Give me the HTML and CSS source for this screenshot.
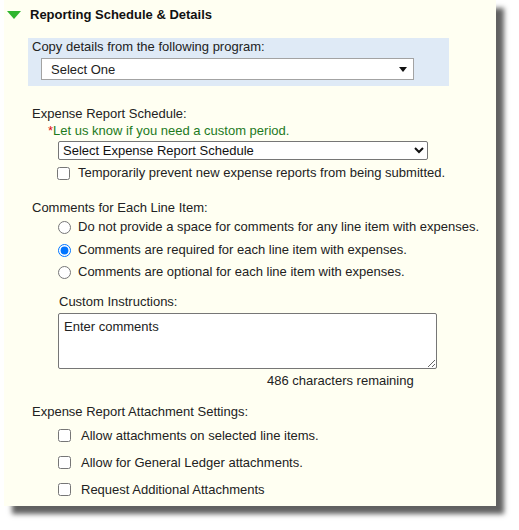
FILE: index.html
```html
<!DOCTYPE html>
<html>
<head>
<meta charset="utf-8">
<title>Reporting Schedule &amp; Details</title>
<link rel="stylesheet" href="styles.css">
</head>
<body>
<div class="panel">
  <div class="header">
    <svg class="toggle" width="14" height="8" viewBox="0 0 14 8"><polygon points="0,0 14,0 7,8" fill="#2fb52f"/></svg>
    <span class="title">Reporting Schedule &amp; Details</span>
  </div>

  <div class="copy-box">
    <div class="copy-label">Copy details from the following program:</div>
    <div class="select-wrap">
      <select class="copy-select"><option>Select One</option></select>
      <svg class="select-arrow" width="8" height="5" viewBox="0 0 8 5"><polygon points="0,0 8,0 4,5" fill="#111"/></svg>
    </div>
  </div>

  <div class="label">Expense Report Schedule:</div>
  <div class="note"><span class="req">*</span>Let us know if you need a custom period.</div>
  <select class="schedule-select"><option>Select Expense Report Schedule</option></select>
  <label class="check-row first-check">
    <input type="checkbox" class="box">
    <span>Temporarily prevent new expense reports from being submitted.</span>
  </label>

  <div class="label comments-label">Comments for Each Line Item:</div>
  <label class="radio-row r1"><input type="radio" name="c" class="radio"><span>Do not provide a space for comments for any line item with expenses.</span></label>
  <label class="radio-row r2"><input type="radio" name="c" class="radio" checked><span>Comments are required for each line item with expenses.</span></label>
  <label class="radio-row r3"><input type="radio" name="c" class="radio"><span>Comments are optional for each line item with expenses.</span></label>

  <div class="custom-label">Custom Instructions:</div>
  <textarea class="instructions">Enter comments</textarea>
  <div class="remaining">486 characters remaining</div>

  <div class="label attach-label">Expense Report Attachment Settings:</div>
  <label class="attach-row a1"><input type="checkbox" class="box"><span>Allow attachments on selected line items.</span></label>
  <label class="attach-row"><input type="checkbox" class="box"><span>Allow for General Ledger attachments.</span></label>
  <label class="attach-row"><input type="checkbox" class="box"><span>Request Additional Attachments</span></label>
</div>
</body>
</html>
```

FILE: styles.css
```css
html, body {
  margin: 0;
  padding: 0;
  background: #ffffff;
}

body {
  font-family: "Liberation Sans", Arial, sans-serif;
  font-size: 13px;
  line-height: 15px;
  color: #222222;
  min-height: 530px;
  box-sizing: border-box;
  padding-bottom: 24px;
}

.panel {
  margin-left: 4px;
  width: 492px;
  height: 506px;
  box-sizing: border-box;
  background: #fffff2;
  box-shadow: 8px 8px 5px rgba(0, 0, 0, 0.62);
  display: flex;
  flex-direction: column;
  align-items: flex-start;
}

.header {
  display: flex;
  align-items: center;
  padding: 7px 0 0 3px;
}

.toggle {
  display: block;
  margin-right: 9px;
}

.title {
  font-weight: bold;
  color: #111111;
}

.copy-box {
  margin: 16px 0 0 24px;
  width: 421px;
  height: 48px;
  box-sizing: border-box;
  background: #dfeaf6;
  padding: 1px 0 0 4px;
}

.select-wrap {
  position: relative;
  margin: 4px 0 0 9px;
  width: 373px;
  height: 22px;
}

.copy-select {
  appearance: none;
  -webkit-appearance: none;
  display: block;
  width: 373px;
  height: 22px;
  box-sizing: border-box;
  border: 1px solid #a3a3a3;
  border-radius: 0;
  background: #ffffff;
  font: inherit;
  color: #222222;
  padding: 0 0 0 9px;
  margin: 0;
}

.select-arrow {
  position: absolute;
  right: 7px;
  top: 9px;
  pointer-events: none;
}

.label {
  margin: 20px 0 0 28px;
}

.note {
  margin: 2px 0 0 44px;
  color: #1d7a1d;
}

.req {
  color: #e01010;
}

.schedule-select {
  display: block;
  margin: 3px 0 0 54px;
  width: 370px;
  height: 19px;
  box-sizing: border-box;
  font: inherit;
  color: #111111;
  border: 1px solid #767676;
  border-radius: 2px;
  background: #ffffff;
  padding: 0;
}

.check-row {
  display: flex;
  align-items: flex-start;
  margin: 5px 0 0 53px;
}

.box {
  width: 13px;
  height: 13px;
  margin: 2px 8px 0 0;
  flex: none;
}

.comments-label {
  margin-top: 20px;
}

.radio-row {
  display: flex;
  align-items: flex-start;
  margin: 7.5px 0 0 54px;
}

.radio-row.r1 {
  margin-top: 4px;
}

.radio {
  width: 13px;
  height: 13px;
  margin: 2px 7px 0 0;
  flex: none;
}

.custom-label {
  margin: 15px 0 0 55px;
}

.instructions {
  display: block;
  margin: 4px 0 0 54px;
  width: 379px;
  height: 56px;
  box-sizing: border-box;
  border: 1px solid #767676;
  border-radius: 2px;
  background: #ffffff;
  font: inherit;
  color: #222222;
  padding: 5px 5px;
  resize: vertical;
}

.remaining {
  margin: 4px 0 0 263px;
}

.attach-label {
  margin-top: 16px;
}

.attach-row {
  display: flex;
  align-items: flex-start;
  margin: 12px 0 0 54px;
}

.attach-row.a1 {
  margin-top: 9px;
}

.attach-row .box {
  margin: 1px 10px 0 0;
}
```
